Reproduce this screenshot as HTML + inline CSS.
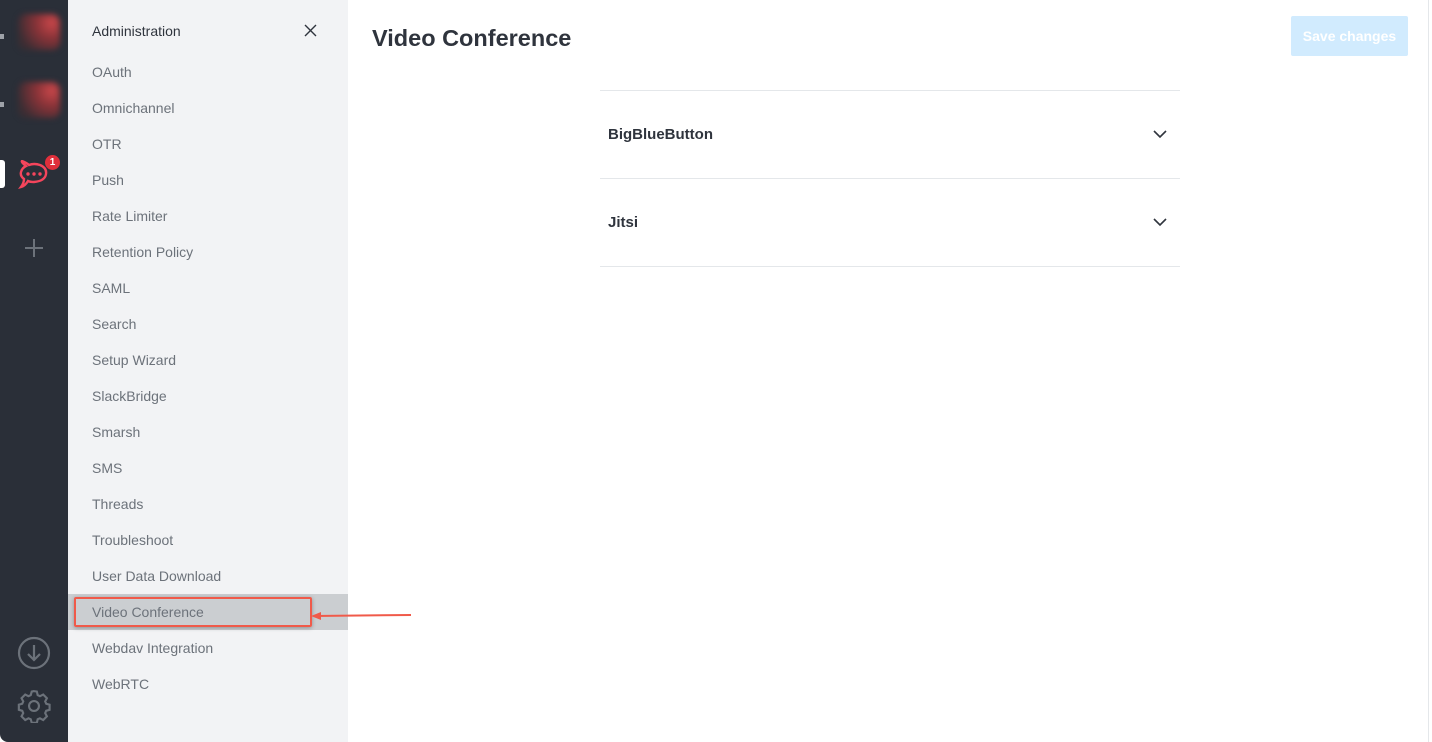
<html><head><style>
body{margin:0;width:1432px;height:742px;overflow:hidden;font-family:"Liberation Sans",sans-serif;background:#fff;position:relative}
.rail{position:absolute;left:0;top:0;width:68px;height:742px;background:#2a2f38;border-bottom-left-radius:8px}
.blur{position:absolute;left:18px;width:42px;height:36px;border-radius:8px;background:radial-gradient(circle at 80% 25%,#c8474a 0,#8a3338 35%,#3a2d33 80%);filter:blur(3px)}
.pip{position:absolute;left:0;width:4px;height:5px;background:#9ea2a8}
.panel{position:absolute;left:68px;top:0;width:280px;height:742px;background:#f2f3f5}
.item{position:absolute;left:24px;font-size:14px;color:#6c727a}
.sel{position:absolute;left:0;top:594px;width:280px;height:36px;background:#cbced1}
h1{position:absolute;left:372px;top:25px;margin:0;font-size:23.5px;color:#2f343d}
.btn{position:absolute;left:1291px;top:16px;width:117px;height:40px;background:#d1ebfe;color:#fff;font-size:14px;font-weight:bold;text-align:center;line-height:40px;border-radius:2px}
.line{position:absolute;left:600px;width:580px;height:1px;background:#e4e7ea}
.sec{position:absolute;left:608px;font-size:15px;font-weight:bold;color:#2f343d}
</style></head><body>
<div class="rail">
<div class="blur" style="top:14px"></div><div class="pip" style="top:34px"></div>
<div class="blur" style="top:82px"></div><div class="pip" style="top:102px"></div>
<div style="position:absolute;left:0;top:160px;width:5px;height:28px;background:#fff;border-radius:0 3px 3px 0"></div>
<svg style="position:absolute;left:18px;top:160px" width="32" height="30" viewBox="0 0 32 30"><path d="M8 6 Q3 2 4 1 Q9 3 11 5 Q16 3 22 5 Q29 8 28 14 Q27 21 16 22 Q12 22 10 21 Q7 26 3 27 Q6 23 6 19 Q2 16 3 12 Q4 8 8 6Z" fill="none" stroke="#f5455c" stroke-width="2.4"/><circle cx="10" cy="14" r="1.7" fill="#f5455c"/><circle cx="16" cy="14" r="1.7" fill="#f5455c"/><circle cx="22" cy="14" r="1.7" fill="#f5455c"/></svg>
<div style="position:absolute;left:45px;top:155px;width:15px;height:15px;border-radius:50%;background:#e02f3b;color:#fff;font-size:10px;font-weight:bold;text-align:center;line-height:15px">1</div>
<svg style="position:absolute;left:24px;top:238px" width="20" height="20"><path d="M10 1V19M1 10H19" stroke="#6c727a" stroke-width="2"/></svg>
<svg style="position:absolute;left:17px;top:636px" width="34" height="34" viewBox="0 0 34 34"><circle cx="17" cy="17" r="15" fill="none" stroke="#6c727a" stroke-width="2.2"/><path d="M17 9V24M11 18L17 24L23 18" fill="none" stroke="#6c727a" stroke-width="2.2"/></svg>
<svg style="position:absolute;left:17px;top:689px" width="34" height="34" viewBox="0 0 24 24"><path d="M12 1.5l2 .3.6 2.5 1.6.8 2.3-1.2 2.6 2.6-1.2 2.3.7 1.6 2.4.7v3.6l-2.4.7-.7 1.6 1.2 2.3-2.6 2.6-2.3-1.2-1.6.7-.6 2.5h-3.6l-.7-2.5-1.6-.7-2.3 1.2-2.6-2.6 1.2-2.3-.7-1.6-2.4-.7v-3.6l2.4-.7.7-1.6-1.2-2.300 2.6-2.6 2.3 1.2 1.6-.8.7-2.5z" fill="none" stroke="#6c727a" stroke-width="1.5"/><circle cx="12" cy="12" r="3.5" fill="none" stroke="#6c727a" stroke-width="1.5"/></svg>
</div>
<div class="panel">
<div class="sel"></div>
<div class="item" style="top:23px;color:#2f343d">Administration</div>
<svg style="position:absolute;left:236px;top:24px" width="13" height="13"><path d="M1 1L12 12M12 1L1 12" stroke="#2f343d" stroke-width="1.4"/></svg>
<div class="item" style="top:64px">OAuth</div>
<div class="item" style="top:100px">Omnichannel</div>
<div class="item" style="top:136px">OTR</div>
<div class="item" style="top:172px">Push</div>
<div class="item" style="top:208px">Rate Limiter</div>
<div class="item" style="top:244px">Retention Policy</div>
<div class="item" style="top:280px">SAML</div>
<div class="item" style="top:316px">Search</div>
<div class="item" style="top:352px">Setup Wizard</div>
<div class="item" style="top:388px">SlackBridge</div>
<div class="item" style="top:424px">Smarsh</div>
<div class="item" style="top:460px">SMS</div>
<div class="item" style="top:496px">Threads</div>
<div class="item" style="top:532px">Troubleshoot</div>
<div class="item" style="top:568px">User Data Download</div>
<div class="item" style="top:604px">Video Conference</div>
<div class="item" style="top:640px">Webdav Integration</div>
<div class="item" style="top:676px">WebRTC</div>
<div style="position:absolute;left:6px;top:597px;width:234px;height:26px;border:2px solid #f05a4a;border-radius:2px;box-shadow:0 1px 4px rgba(0,0,0,.3)"></div>
</div>
<svg style="position:absolute;left:308px;top:609px" width="106" height="14"><path d="M6 7L103 6" stroke="#f05a4a" stroke-width="2"/><path d="M3 7L13 3L13 11Z" fill="#f05a4a"/></svg>
<h1>Video Conference</h1>
<div class="btn">Save changes</div>
<div class="line" style="top:90px"></div>
<div class="sec" style="top:126px">BigBlueButton</div>
<svg style="position:absolute;left:1153px;top:129px" width="14" height="10"><path d="M1 2L7 8L13 2" fill="none" stroke="#2f343d" stroke-width="1.6"/></svg>
<div class="line" style="top:178px"></div>
<div class="sec" style="top:214px">Jitsi</div>
<svg style="position:absolute;left:1153px;top:217px" width="14" height="10"><path d="M1 2L7 8L13 2" fill="none" stroke="#2f343d" stroke-width="1.6"/></svg>
<div class="line" style="top:266px"></div>
<div style="position:absolute;left:1428px;top:0;width:1px;height:742px;background:#e4e7ea"></div>
</body></html>
